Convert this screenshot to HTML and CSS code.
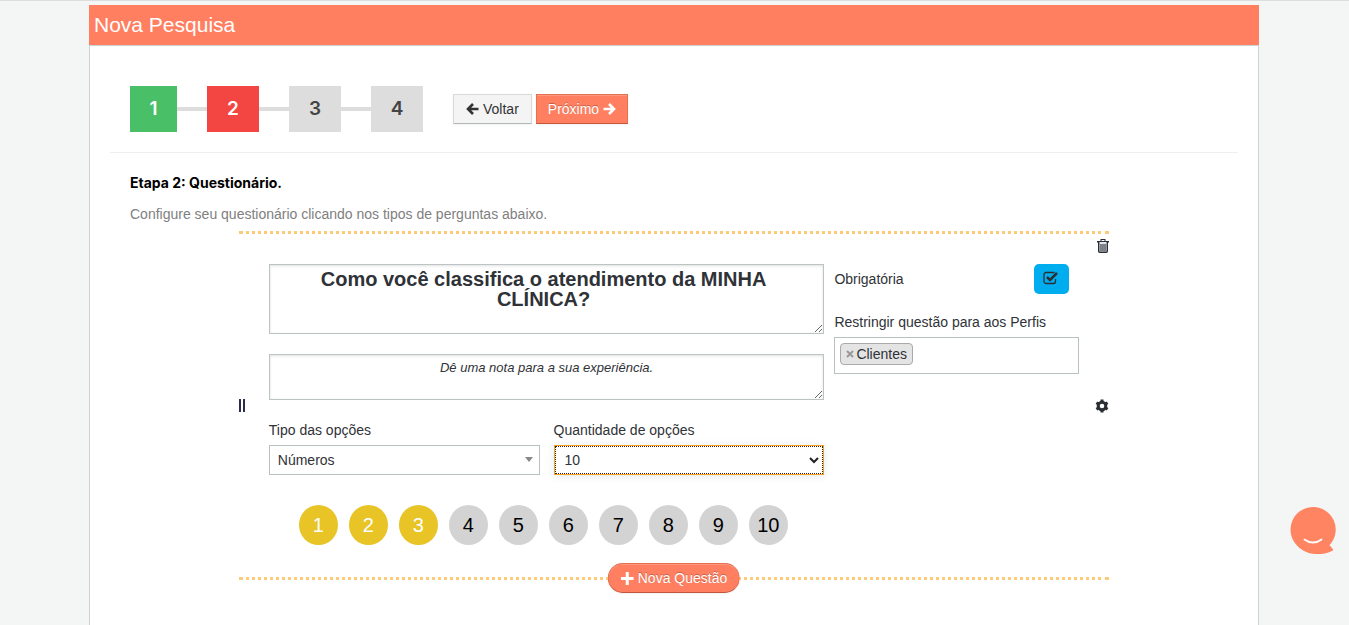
FILE: index.html
```html
<!DOCTYPE html>
<html lang="pt-BR">
<head>
<meta charset="utf-8">
<title>Nova Pesquisa</title>
<link rel="stylesheet" href="styles.css">
</head>
<body>
<main class="container">
  <h1 class="title">Nova Pesquisa</h1>
  <section class="panel">
    <div class="wizard">
      <ol class="steps">
        <li class="step done">1</li>
        <li class="step current">2</li>
        <li class="step">3</li>
        <li class="step">4</li>
      </ol>
      <div class="actions">
        <button type="button" class="btn"><svg class="arrow" viewBox="0 0 13 12" aria-hidden="true"><path d="M7 1 2 6l5 5M2.500 6H12.500"/></svg>Voltar</button>
        <button type="button" class="btn primary">Próximo<svg class="arrow" viewBox="0 0 13 12" aria-hidden="true"><path d="m6 1 5 5-5 5M10.500 6H.5"/></svg></button>
      </div>
    </div>
    <div class="content">
      <h2 class="subtitle">Etapa 2: Questionário.</h2>
      <p class="hint">Configure seu questionário clicando nos tipos de perguntas abaixo.</p>
      <div class="question">
        <div class="rail"><span class="handle"></span></div>
        <div class="main">
          <textarea class="field ask" rows="3" aria-label="Pergunta">Como você classifica o atendimento da MINHA CLÍNICA?</textarea>
          <textarea class="field note" rows="2" aria-label="Descrição">Dê uma nota para a sua experiência.</textarea>
          <div class="selects">
            <div class="group">
              <label for="tipo">Tipo das opções</label>
              <div class="pick">
                <select id="tipo" class="select"><option>Números</option></select>
                <svg class="caret" viewBox="0 0 8 5" aria-hidden="true"><path d="M0 0h8L4 5z"/></svg>
              </div>
            </div>
            <div class="group">
              <label for="qtd">Quantidade de opções</label>
              <div class="pick">
                <select id="qtd" class="select active"><option>10</option></select>
                <svg class="chevron" viewBox="0 0 10 7" aria-hidden="true"><path d="m1 1 4 4 4-4"/></svg>
              </div>
            </div>
          </div>
          <div class="scale">
            <span class="dot on">1</span><span class="dot on">2</span><span class="dot on">3</span><span class="dot">4</span><span class="dot">5</span><span class="dot">6</span><span class="dot">7</span><span class="dot">8</span><span class="dot">9</span><span class="dot">10</span>
          </div>
        </div>
        <div class="side">
          <div class="required">
            <label for="obrigatoria">Obrigatória</label>
            <span class="toggle">
              <input id="obrigatoria" type="checkbox" checked>
              <svg class="check" viewBox="0 0 16 14" aria-hidden="true"><path d="M12.500 8v2.500a2 2 0 0 1-2 2H3a2 2 0 0 1-2-2V3.500a2 2 0 0 1 2-2h7.500l1 .2" stroke-width="1.300"/><path d="m4 6 3 3 7-7" stroke-width="2.500"/></svg>
            </span>
          </div>
          <div class="group">
            <span>Restringir questão para aos Perfis</span>
            <div class="tags"><span class="tag"><button type="button" class="remove" aria-label="Remover Clientes"><svg viewBox="0 0 8 8" aria-hidden="true"><path d="m1 1 6 6M7 1 1 7"/></svg></button>Clientes</span></div>
          </div>
        </div>
        <div class="rail tools">
          <button type="button" class="icon trash" aria-label="Excluir"><svg viewBox="0 0 12 14" aria-hidden="true"><path d="M0 2h12v1.500H0zM3.500 0h5v2h-1V1h-3v1h-1z" fill="#2b2e33"/><path d="M1.700 3v9.300a1 1 0 0 0 1 1h6.600a1 1 0 0 0 1-1V3" fill="#dfe6ee" stroke="#2b2e33" stroke-width="1.400"/><path d="M4 5v7M6 5v7M8 5v7" stroke="#2b2e33" stroke-width="1.100"/></svg></button>
          <button type="button" class="icon gear" aria-label="Configurações"><svg viewBox="0 0 14 14" aria-hidden="true"><circle cx="7" cy="7" r="3.800" fill="none" stroke="#2b2e33" stroke-width="3"/><path d="M7 .5V3M7 11v2.500M1.400 3.700l2.100 1.300M10.500 9l2.100 1.300M1.400 10.300 3.500 9M10.500 5l2.100-1.300" stroke="#2b2e33" stroke-width="3"/></svg></button>
        </div>
        <button type="button" class="btn primary add"><svg class="plus" viewBox="0 0 13 13" aria-hidden="true"><path d="M6.500 0v13M0 6.500h13"/></svg>Nova Questão</button>
      </div>
    </div>
  </section>
</main>
<button type="button" class="chat" aria-label="Chat"><svg viewBox="0 0 46 48" aria-hidden="true"><path d="M23 0a22.500 22.500 0 0 1 16.500 38l4 5C38 46.500 31 47.500 25 47 11 46 .5 35 .5 22.500A22.500 22.500 0 0 1 23 0z" fill="#ff8562"/><path d="M14.500 32.500c5 4 12 4 17 0" fill="none" stroke="#fff" stroke-width="1.800" stroke-linecap="round"/></svg></button>
</body>
</html>
```
FILE: styles.css
```css
* { box-sizing: border-box; }
body {
  margin: 0;
  min-height: 100vh;
  display: flex;
  flex-direction: column;
  padding: 4px 1px 0 0;
  border-top: 1px solid #ddd;
  background: #f4f6f6;
  color: #2f3237;
  font: 14px/20px "Liberation Sans", Arial, sans-serif;
}
button, select, textarea, input { font: inherit; color: inherit; margin: 0; }
svg { display: block; }
.container {
  flex: 1;
  display: flex;
  flex-direction: column;
  width: 100%;
  max-width: 1170px;
  margin: 0 auto;
}
.title {
  margin: 0;
  padding: 0 5px;
  background: #ff7f60;
  color: #fff;
  font-size: 21px;
  font-weight: 400;
  line-height: 40px;
}
.panel {
  flex: 1;
  padding: 40px 20px 0;
  background: #fff;
  border: 1px solid #cdd2d2;
  border-bottom: 0;
}
.wizard {
  display: flex;
  align-items: center;
  gap: 30px;
  padding: 0 20px 20px;
  border-bottom: 1px solid #eee;
}
.steps {
  display: flex;
  gap: 30px;
  margin: 0;
  padding: 0;
  list-style: none;
  background: linear-gradient(#ddd, #ddd) center / 100% 4px no-repeat;
}
.step {
  width: 52px;
  background: #ddd;
  color: #444;
  font: 600 19px/46px Inter, sans-serif;
  text-align: center;
}
.done { width: 47px; background: #49bf67; color: #fff; }
.current { background: #f34541; color: #fff; }
.actions { display: flex; gap: 4px; }
.btn {
  display: flex;
  align-items: center;
  gap: 4px;
  height: 30px;
  padding: 0 12px;
  background: #f4f4f4;
  border: 1px solid #d8dada;
  border-bottom-color: #b3b8b8;
  box-shadow: 0 1px 2px rgba(0, 0, 0, .06);
  color: #333;
  white-space: nowrap;
}
.primary {
  padding: 0 11px;
  background: #ff7f60;
  border-color: #e5704f;
  border-bottom-color: #c4583f;
  box-shadow: inset 0 1px 0 rgba(255, 255, 255, .2), 0 1px 2px rgba(0, 0, 0, .06);
  color: #fff;
  text-shadow: 0 -1px 0 rgba(0, 0, 0, .25);
}
.arrow { width: 13px; height: 12px; fill: none; stroke: currentColor; stroke-width: 2.6; }
.plus { width: 13px; height: 13px; stroke: currentColor; stroke-width: 3; }
.content { padding: 20px 20px 32px; }
.subtitle {
  margin: 0;
  color: #000;
  font: 700 14px/20px Inter, sans-serif;
}
.hint { margin: 11px 0 7px; color: #808080; }
.question {
  position: relative;
  display: grid;
  grid-template-columns: 30px 556fr 255fr 30px;
  width: 80%;
  margin: 0 auto;
  border: dotted #fdca78;
  border-width: 3px 0;
}
.rail { display: flex; flex-direction: column; justify-content: center; }
.handle { width: 6px; height: 13px; border: solid #2b2e4a; border-width: 0 2px; }
.main { padding: 30px 0 32px; }
.field {
  display: block;
  width: 100%;
  margin-bottom: 20px;
  padding: 4px 6px;
  background: #fff;
  border: 1px solid #bcc3c3;
  border-radius: 0;
  box-shadow: inset 0 1px 3px rgba(0, 0, 0, .12);
  text-align: center;
  resize: both;
}
.ask { height: 70px; padding-right: 12px; font-size: 20px; font-weight: 700; line-height: 20px; }
.note { height: 46px; font-size: 13px; font-style: italic; line-height: 18px; }
.selects { display: grid; grid-template-columns: 1fr 1fr; gap: 14px; }
.group { display: flex; flex-direction: column; gap: 5px; }
.pick { position: relative; }
.select {
  display: block;
  width: 100%;
  height: 30px;
  padding: 0 8px;
  appearance: none;
  background: #fff;
  border: 1px solid #b9c0c0;
  border-radius: 0;
}
.active {
  padding: 0 10px;
  border-color: #f9a11b;
  outline: 1px dotted #222;
  outline-offset: -2px;
  box-shadow: 0 1px 8px rgba(0, 60, 90, .12);
}
.caret { position: absolute; right: 7px; top: 12px; width: 8px; height: 5px; fill: #888; }
.chevron { position: absolute; right: 5px; top: 12px; width: 10px; height: 7px; fill: none; stroke: #222; stroke-width: 2; }
.scale { display: flex; gap: 11px; padding: 30px 30px 0; }
.dot {
  width: 39px;
  height: 40px;
  border-radius: 50%;
  background: #d3d3d3;
  color: #000;
  font-size: 20px;
  line-height: 40px;
  text-align: center;
}
.on { background: #e8c426; color: #fff; }
.side { padding: 30px 0 0 10px; }
.required {
  display: flex;
  align-items: center;
  justify-content: space-between;
  margin-bottom: 18px;
  padding-right: 10px;
}
.toggle { position: relative; }
.toggle input {
  display: block;
  width: 35px;
  height: 30px;
  appearance: none;
  background: #00adee;
  border-radius: 5px;
}
.check { position: absolute; left: 9px; top: 7px; width: 16px; height: 14px; fill: none; stroke: #2b2e33; pointer-events: none; }
.tags {
  display: flex;
  height: 37px;
  padding: 5px;
  border: 1px solid #b9c0c0;
}
.tag {
  display: flex;
  align-items: center;
  height: 22px;
  padding: 0 5px;
  gap: 2px;
  background: #e4e4e4;
  border: 1px solid #aaa;
  border-radius: 4px;
}
.remove { width: 8px; padding: 0; background: none; border: 0; }
.remove svg { width: 8px; height: 8px; stroke: #999; stroke-width: 2; }
.tools { position: relative; align-items: flex-end; }
.icon { padding: 0; background: none; border: 0; }
.trash { position: absolute; top: 5px; right: 0; }
.trash svg { width: 12px; height: 14px; }
.gear svg { width: 14px; height: 14px; }
.add {
  position: absolute;
  left: 50%;
  bottom: -16px;
  transform: translateX(-50%);
  padding: 0 12px;
  border-radius: 15px;
}
.chat {
  position: fixed;
  right: 13px;
  bottom: 70px;
  padding: 0;
  background: none;
  border: 0;
}
.chat svg { width: 46px; height: 48px; }
```
